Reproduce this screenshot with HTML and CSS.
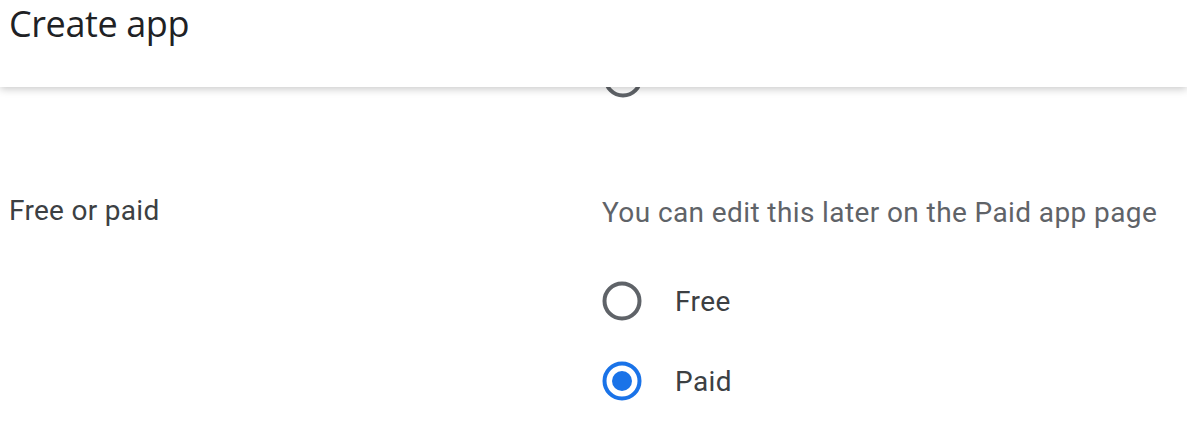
FILE: index.html
```html
<!DOCTYPE html>
<html>
<head>
<meta charset="utf-8">
<link rel="stylesheet" href="styles.css">
</head>
<body>
<header class="topbar">
  <h1 class="title">Create app</h1>
</header>
<main class="content">
  <div class="prev-group">
    <div class="option">
      <svg class="radio" viewBox="0 0 40 40" width="40" height="40"><circle cx="20" cy="20" r="17.5" fill="none" stroke="#5f6368" stroke-width="4"/></svg>
    </div>
  </div>
  <section class="field">
    <div class="field-label">Free or paid</div>
    <div class="field-body">
      <div class="hint">You can edit this later on the Paid app page</div>
      <div class="options">
        <div class="option">
          <svg class="radio" viewBox="0 0 40 40" width="40" height="40"><circle cx="20" cy="20" r="17.5" fill="none" stroke="#5f6368" stroke-width="4"/></svg>
          <span class="option-label">Free</span>
        </div>
        <div class="option">
          <svg class="radio" viewBox="0 0 40 40" width="40" height="40"><circle cx="20" cy="20" r="17.5" fill="none" stroke="#1a73e8" stroke-width="4"/><circle cx="20" cy="20" r="10" fill="#1a73e8"/></svg>
          <span class="option-label">Paid</span>
        </div>
      </div>
    </div>
  </section>
</main>
</body>
</html>
```
FILE: styles.css
```css
html, body {
  margin: 0;
  padding: 0;
  background: #ffffff;
  font-family: Roboto, "Liberation Sans", sans-serif;
  overflow: hidden;
}
.topbar {
  position: absolute;
  top: 0;
  left: 0;
  right: 0;
  height: 87px;
  background: #ffffff;
  box-shadow: 0 2px 8px rgba(0, 0, 0, 0.22);
  z-index: 2;
}
.title {
  margin: 0;
  padding: 2px 0 0 9px;
  font-family: "Open Sans", Roboto, sans-serif;
  font-weight: 500;
  font-size: 36px;
  line-height: 44px;
  color: #202124;
  letter-spacing: -0.4px;
}
.content {
  padding-top: 38px;
}
.prev-group {
  padding-left: 603px;
}
.option {
  display: flex;
  align-items: center;
  height: 80px;
  gap: 33px;
}
.radio {
  display: block;
  width: 40px;
  height: 40px;
  flex: none;
}
.option-label {
  font-size: 28px;
  letter-spacing: 0.4px;
  color: #3c4043;
}
.field {
  display: grid;
  grid-template-columns: 593px 1fr;
  padding-left: 9px;
  margin-top: 75px;
}
.field-label {
  font-size: 28px;
  line-height: 36px;
  letter-spacing: 0.3px;
  color: #3c4043;
}
.field-body {
  display: flex;
  flex-direction: column;
}
.hint {
  font-size: 28px;
  line-height: 36px;
  letter-spacing: 0.4px;
  color: #5f6368;
  margin-top: 2px;
  margin-bottom: 30px;
}
.options {
  display: flex;
  flex-direction: column;
}
```
